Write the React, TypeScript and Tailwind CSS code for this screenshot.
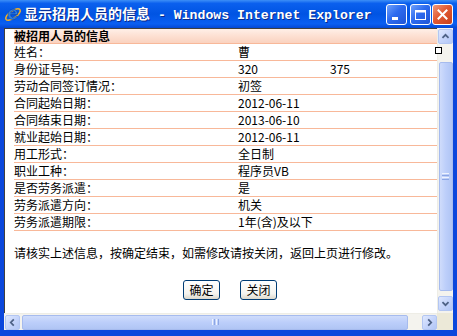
import React from 'react';

const rows: { label: string; value: React.ReactNode }[] = [
  { label: '姓名：', value: '曹' },
  {
    label: '身份证号码：',
    value: (
      <>
        <span className="inline-block w-[92px]">320</span>
        <span>375</span>
      </>
    ),
  },
  { label: '劳动合同签订情况：', value: '初签' },
  { label: '合同起始日期：', value: '2012-06-11' },
  { label: '合同结束日期：', value: '2013-06-10' },
  { label: '就业起始日期：', value: '2012-06-11' },
  { label: '用工形式：', value: '全日制' },
  { label: '职业工种：', value: '程序员VB' },
  { label: '是否劳务派遣：', value: '是' },
  { label: '劳务派遣方向：', value: '机关' },
  { label: '劳务派遣期限：', value: '1年(含)及以下' },
];

function IeIcon() {
  return (
    <svg width="18" height="18" viewBox="0 0 18 18">
      <ellipse cx="9" cy="9.5" rx="8.5" ry="3.6" transform="rotate(-35 9 9.5)" fill="none" stroke="#f0b02a" strokeWidth="1.6" />
      <path d="M4 10.2 C4 6.5 6.3 4.2 9.2 4.2 C12 4.2 13.8 6.3 13.6 9.6 L6.6 9.6 C6.8 11.6 8 12.8 9.6 12.8 C10.8 12.8 11.7 12.2 12.2 11.3 L13.5 11.3 C12.8 13.4 11.2 14.6 9.3 14.6 C6.2 14.6 4 12.8 4 10.2 Z M6.7 8.1 L11.2 8.1 C11.1 6.7 10.3 5.8 9 5.8 C7.8 5.8 6.9 6.7 6.7 8.1 Z" fill="#2f7fe0" stroke="#0b3d9a" strokeWidth="0.5" />
    </svg>
  );
}

function CaptionButton({ kind }: { kind: 'min' | 'max' | 'close' }) {
  const bg =
    kind === 'close'
      ? 'bg-[linear-gradient(135deg,#f09a7c_0%,#e25a33_45%,#c7401b_100%)]'
      : 'bg-[linear-gradient(135deg,#6fa1fb_0%,#2d6bef_45%,#1f55d6_100%)]';
  return (
    <div className={`w-[21px] h-[21px] rounded-[3px] border border-white flex items-center justify-center ${bg}`}>
      <svg width="13" height="13" viewBox="0 0 13 13">
        {kind === 'min' && <rect x="2" y="9" width="6" height="3" fill="#fff" />}
        {kind === 'max' && (
          <>
            <rect x="1.5" y="2.5" width="10" height="9" fill="none" stroke="#fff" strokeWidth="1" />
            <rect x="1" y="2" width="11" height="2.5" fill="#fff" />
          </>
        )}
        {kind === 'close' && <path d="M2.5 2.5 L10.5 10.5 M10.5 2.5 L2.5 10.5" stroke="#fff" strokeWidth="2" strokeLinecap="square" />}
      </svg>
    </div>
  );
}

function ScrollButton({ dir }: { dir: 'up' | 'down' | 'left' | 'right' }) {
  const d = {
    up: 'M4 9 L7.5 5.5 L11 9',
    down: 'M4 6 L7.5 9.5 L11 6',
    left: 'M9 4 L5.5 7.5 L9 11',
    right: 'M6 4 L9.5 7.5 L6 11',
  }[dir];
  return (
    <div className="w-[15px] h-[15px] shrink-0 rounded-[2px] border border-[#b3c6f2] bg-[linear-gradient(135deg,#dfe8fe_0%,#c6d5fb_50%,#b2c6f5_100%)] flex items-center justify-center">
      <svg width="15" height="15" viewBox="0 0 15 15">
        <path d={d} fill="none" stroke="#4d6185" strokeWidth="2" />
      </svg>
    </div>
  );
}

export default function App() {
  return (
    <div className="relative w-[457px] h-[336px] overflow-hidden flex flex-col bg-[#0b47dc] font-['Noto_Sans_CJK_SC',sans-serif] text-[12px] text-black">
      {/* title bar */}
      <div className="h-[28px] shrink-0 flex items-center pl-[4px] pr-[4px] bg-[linear-gradient(to_bottom,#3d8ff7_0%,#0b60ee_12%,#0054e3_50%,#0a5ff2_85%,#0448d4_100%)]">
        <IeIcon />
        <div className="ml-[2px] flex items-baseline text-white font-bold [text-shadow:1px_1px_0_#0a2a8a] whitespace-nowrap">
          <span className="text-[14px] leading-none">显示招用人员的信息</span>
          <span className="font-['Liberation_Mono',monospace] text-[13.2px] leading-none whitespace-pre"> - Windows Internet Explorer</span>
        </div>
        <div className="ml-auto flex gap-[1px] pt-[1px]">
          <CaptionButton kind="min" />
          <div className="w-[1px]" />
          <CaptionButton kind="max" />
          <CaptionButton kind="close" />
        </div>
      </div>

      {/* body */}
      <div className="flex-1 flex flex-col px-[4px] pb-[6px]">
        <div className="h-[285px] flex">
          {/* content */}
          <div className="w-[433px] h-full overflow-hidden bg-white border-t border-l border-[#404040]">
            <div className="-mt-[2px] pl-[9px] w-[440px]">
              <div className="h-[17px] border-b border-[#f8b899] bg-[linear-gradient(to_bottom,#fff4ee_0%,#fde2d5_50%,#fad2bf_100%)] font-bold leading-[16px] pt-[1px] whitespace-nowrap">
                <span className="block leading-[15px]">被招用人员的信息</span>
              </div>
              {rows.map((r) => (
                <div key={r.label} className="h-[17px] flex border-b border-[#f8b899] leading-[16px] whitespace-nowrap">
                  <div className="w-[224px] shrink-0">{r.label}</div>
                  <div>{r.value}</div>
                </div>
              ))}
              <div className="mt-[14px] leading-[16px] whitespace-nowrap">
                请核实上述信息，按确定结束，如需修改请按关闭，返回上页进行修改。
              </div>
              <div className="mt-[19px] ml-[169px] flex gap-[20px]">
                {['确定', '关闭'].map((t) => (
                  <button
                    key={t}
                    className="w-[37px] h-[20px] rounded-[3px] border border-[#003c74] bg-[linear-gradient(to_bottom,#ffffff_0%,#f5f4ef_70%,#dcd8cc_100%)] text-[12px] leading-[18px] text-black"
                  >
                    {t}
                  </button>
                ))}
              </div>
            </div>
          </div>
          {/* vertical scrollbar */}
          <div className="w-[16px] h-full flex flex-col items-center bg-[#f4f3ee] border-l border-[#eeede6] pt-[1px]">
            <ScrollButton dir="up" />
            <div className="h-[18px]" />
            <div className="w-[14px] h-[229px] rounded-[2px] border border-[#a6bbee] bg-[linear-gradient(to_right,#cfdcfb_0%,#bccefa_50%,#b0c5f4_100%)] flex flex-col items-center justify-center gap-[1px]">
              <div className="w-[7px] h-[1px] bg-[#eef3fe]" />
              <div className="w-[7px] h-[1px] bg-[#8ca6e4]" />
              <div className="w-[7px] h-[1px] bg-[#eef3fe]" />
              <div className="w-[7px] h-[1px] bg-[#8ca6e4]" />
            </div>
            <div className="h-[5px]" />
            <ScrollButton dir="down" />
          </div>
        </div>
        {/* horizontal scrollbar */}
        <div className="h-[17px] flex">
          <div className="w-[433px] h-full flex items-center bg-[#f4f3ee] border-t border-[#eeede6] pl-[1px]">
            <ScrollButton dir="left" />
            <div className="w-[2px]" />
            <div className="w-[386px] h-[15px] rounded-[2px] border border-[#a6bbee] bg-[linear-gradient(to_bottom,#cfdcfb_0%,#bccefa_50%,#b0c5f4_100%)] flex items-center justify-center gap-[1px]">
              <div className="w-[1px] h-[6px] bg-[#eef3fe]" />
              <div className="w-[1px] h-[6px] bg-[#8ca6e4]" />
              <div className="w-[1px] h-[6px] bg-[#eef3fe]" />
              <div className="w-[1px] h-[6px] bg-[#8ca6e4]" />
            </div>
            <div className="flex-1" />
            <ScrollButton dir="right" />
          </div>
          <div className="w-[16px] h-full bg-[#ece9d8]" />
        </div>
      </div>

      {/* stray square glyph drawn over the track */}
      <div className="absolute left-[435px] top-[47px] w-[7px] h-[7px] border border-black bg-white" />
    </div>
  );
}
